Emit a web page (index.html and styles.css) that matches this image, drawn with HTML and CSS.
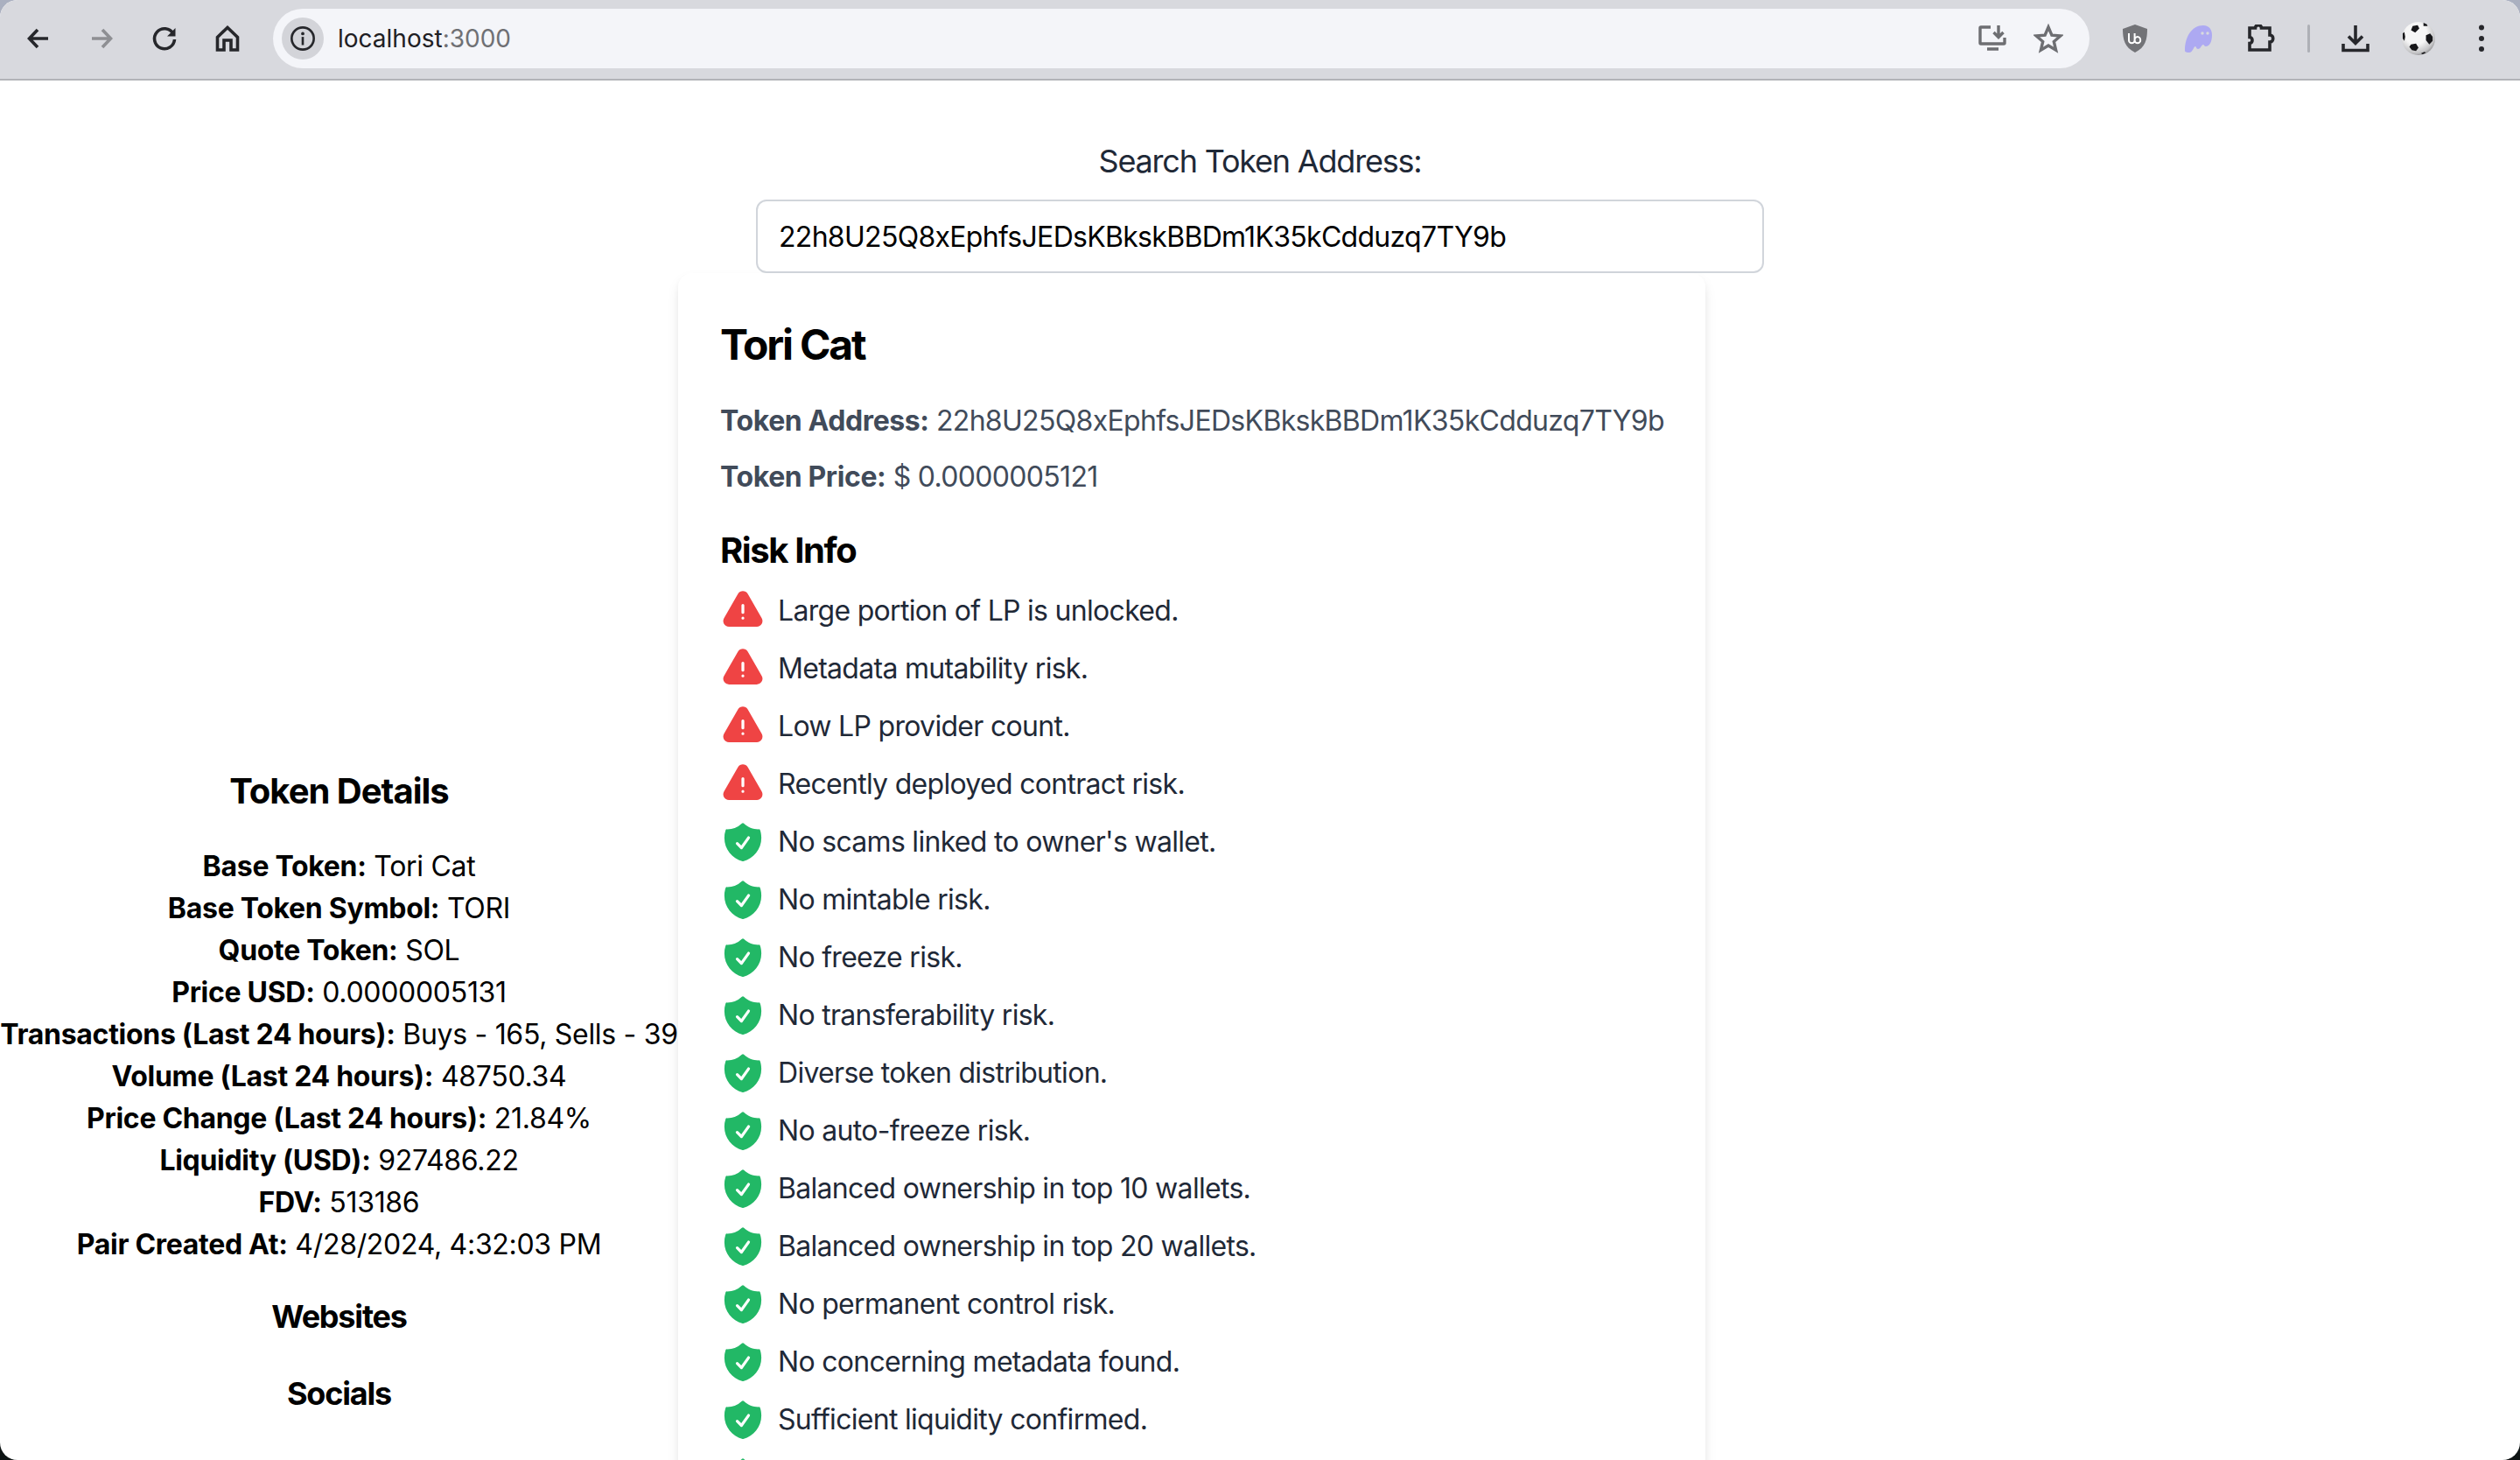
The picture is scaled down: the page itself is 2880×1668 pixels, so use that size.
FILE: index.html
```html
<!DOCTYPE html>
<html lang="en">
<head>
<meta charset="utf-8">
<title>localhost:3000</title>
<link rel="stylesheet" href="styles.css">
</head>
<body>
<svg class="defs" width="0" height="0" aria-hidden="true">
  <symbol id="warn" viewBox="0 0 24 24"><path fill-rule="evenodd" clip-rule="evenodd" d="M9.401 3.003c1.155-2 4.043-2 5.197 0l7.355 12.748c1.154 2-.29 4.5-2.599 4.5H4.645c-2.309 0-3.752-2.5-2.598-4.5L9.4 3.003zM12 8.25a.75.75 0 01.75.75v3.75a.75.75 0 01-1.5 0V9A.75.75 0 0112 8.25zm0 8.25a.75.75 0 100-1.5.75.75 0 000 1.5z"/></symbol>
  <symbol id="ok" viewBox="0 0 24 24"><path fill-rule="evenodd" clip-rule="evenodd" d="M12.516 2.17a.75.75 0 00-1.032 0 11.209 11.209 0 01-7.877 3.08.75.75 0 00-.722.515A12.74 12.74 0 002.25 9.75c0 5.942 4.064 10.933 9.563 12.348a.749.749 0 00.374 0c5.499-1.415 9.563-6.406 9.563-12.348 0-1.39-.223-2.73-.635-3.985a.75.75 0 00-.722-.516l-.143.001c-2.996 0-5.717-1.17-7.734-3.08zm3.094 8.016a.75.75 0 10-1.22-.872l-3.236 4.53L9.53 12.22a.75.75 0 00-1.06 1.06l2.25 2.25a.75.75 0 001.14-.094l3.75-5.25z"/></symbol>
</svg>
<div class="window">
  <header class="toolbar">
    <div class="tool"><svg class="ic" viewBox="0 0 32 32"><path class="st dark" d="M27 16H6M15 6 5.500 16 15 26"/></svg></div>
    <div class="tool"><svg class="ic" viewBox="0 0 32 32"><path class="st faint" d="M5 16h21M17 6l9.500 10L17 26"/></svg></div>
    <div class="tool"><svg class="ic" viewBox="0 0 32 32"><path class="st dark" d="M26 10.500A11.500 11.500 0 1 0 27.500 17"/><path class="fl-dark" d="M19 13.500h9.500V4z"/></svg></div>
    <div class="tool"><svg class="ic" viewBox="0 0 32 32"><path class="st dark" d="M4.500 14.500 16 3.500l11.500 11V29H20V18h-8v11H4.500z"/></svg></div>
    <div class="omnibox">
      <div class="site-info"><svg class="info" viewBox="0 0 32 32"><circle class="st-thin" cx="16" cy="16" r="13.500"/><circle class="fl-dark" cx="16" cy="10" r="2"/><path class="st-thin" d="M16 14v10"/></svg></div>
      <div class="url">localhost<span class="port">:3000</span></div>
      <svg class="ic-omni" viewBox="0 0 34 34"><path class="st-gray" d="M15 4H4a1 1 0 0 0-1 1v17a1 1 0 0 0 1 1h26a1 1 0 0 0 1-1v-6"/><path class="st-gray" d="M24 2v13M18.500 10l5.500 5.500 5.500-5.500M11 29h13"/></svg>
      <svg class="ic-omni star" viewBox="0 0 34 34"><path class="st-gray" d="m17 4 3.900 9.200 10 .8-7.600 6.500 2.300 9.700L17 25l-8.600 5.200 2.300-9.700L3.100 14l10-.8z"/></svg>
    </div>
    <div class="tool"><svg class="ic" viewBox="0 0 32 32"><path class="fl-ub" d="M16 0 30 5c0 12-2 21-14 27C4 26 2 17 2 5z"/><path class="st-ub" d="M9 10v8a3.300 3.300 0 0 0 6.600 0v-8M15.600 10v8a3.300 3.300 0 0 0 6.600 0 3.300 4 0 0 0-6.600 0"/></svg></div>
    <div class="tool"><svg class="ic" viewBox="0 0 32 32"><path class="fl-ghost" d="M1 30C1 14 9 1 22 1c7 0 10 5 10 11 0 8-3 13-7 13-2 0-2-2-3-2-2 0-3 5-6 5-2 0-2-3-3-3-2 0-3 7-7 7-3 0-5-.500-5-2z"/><circle class="fl-white" cx="21" cy="10" r="1.700"/><circle class="fl-white" cx="27" cy="10" r="1.700"/></svg></div>
    <div class="tool"><svg class="ic" viewBox="0 0 32 32"><path class="st dark" d="M3 4h6.500c0-4.500 7-4.500 7 0H26v8c5 0 5 8 0 8v9H3v-7.500c4 0 4-7 0-7z"/></svg></div>
    <div class="sep"></div>
    <div class="tool"><svg class="ic" viewBox="0 0 32 32"><path class="st dark" d="M16 1v20M8 13.500l8 8 8-8M2 22v7.500h28V22"/></svg></div>
    <div class="tool"><svg class="ball" viewBox="0 0 40 40"><defs><radialGradient id="ballg" cx=".42" cy=".36" r=".72"><stop offset=".45" stop-color="#f6f6f6"/><stop offset=".8" stop-color="#c4c4c6"/><stop offset="1" stop-color="#77777a"/></radialGradient></defs><circle cx="20" cy="20" r="20" fill="url(#ballg)"/><path class="fl-black" d="m13 5 6-1 2 4-5 5-5-3zM29 16l5-2 3 4v5l-4 4-4-5zM11 27l6-1 3 5-3 4-5-1-3-4zM23 38l4-2 2 1-4 2zM1 14l2-2 1 6-1 5-2-3zM26 1l4 2 1 2h-5z"/></svg></div>
    <div class="tool"><svg class="ic" viewBox="0 0 32 32"><circle class="fl-dark" cx="16" cy="3.500" r="3"/><circle class="fl-dark" cx="16" cy="16" r="3"/><circle class="fl-dark" cx="16" cy="28" r="3"/></svg></div>
  </header>
  <main class="page">
    <section class="search">
      <label class="search-label" for="addr">Search Token Address:</label>
      <input class="search-input" id="addr" type="text" value="22h8U25Q8xEphfsJEDsKBkskBBDm1K35kCdduzq7TY9b">
    </section>
    <div class="content">
      <aside class="details">
        <h2 class="details-title">Token Details</h2>
        <div class="facts">
          <p><b>Base Token:</b> Tori Cat</p>
          <p><b>Base Token Symbol:</b> TORI</p>
          <p><b>Quote Token:</b> SOL</p>
          <p><b>Price USD:</b> 0.0000005131</p>
          <p><b>Transactions (Last 24 hours):</b> Buys - 165, Sells - 39</p>
          <p><b>Volume (Last 24 hours):</b> 48750.34</p>
          <p><b>Price Change (Last 24 hours):</b> 21.84%</p>
          <p><b>Liquidity (USD):</b> 927486.22</p>
          <p><b>FDV:</b> 513186</p>
          <p><b>Pair Created At:</b> 4/28/2024, 4:32:03 PM</p>
        </div>
        <h3 class="sub-title">Websites</h3>
        <h3 class="sub-title">Socials</h3>
      </aside>
      <article class="card">
        <h1 class="token-name">Tori Cat</h1>
        <p class="meta"><b>Token Address:</b> 22h8U25Q8xEphfsJEDsKBkskBBDm1K35kCdduzq7TY9b</p>
        <p class="meta"><b>Token Price:</b> $ 0.0000005121</p>
        <h2 class="risk-title">Risk Info</h2>
        <ul class="risks">
          <li><svg class="risk-icon bad"><use href="#warn"/></svg>Large portion of LP is unlocked.</li>
          <li><svg class="risk-icon bad"><use href="#warn"/></svg>Metadata mutability risk.</li>
          <li><svg class="risk-icon bad"><use href="#warn"/></svg>Low LP provider count.</li>
          <li><svg class="risk-icon bad"><use href="#warn"/></svg>Recently deployed contract risk.</li>
          <li><svg class="risk-icon good"><use href="#ok"/></svg>No scams linked to owner's wallet.</li>
          <li><svg class="risk-icon good"><use href="#ok"/></svg>No mintable risk.</li>
          <li><svg class="risk-icon good"><use href="#ok"/></svg>No freeze risk.</li>
          <li><svg class="risk-icon good"><use href="#ok"/></svg>No transferability risk.</li>
          <li><svg class="risk-icon good"><use href="#ok"/></svg>Diverse token distribution.</li>
          <li><svg class="risk-icon good"><use href="#ok"/></svg>No auto-freeze risk.</li>
          <li><svg class="risk-icon good"><use href="#ok"/></svg>Balanced ownership in top 10 wallets.</li>
          <li><svg class="risk-icon good"><use href="#ok"/></svg>Balanced ownership in top 20 wallets.</li>
          <li><svg class="risk-icon good"><use href="#ok"/></svg>No permanent control risk.</li>
          <li><svg class="risk-icon good"><use href="#ok"/></svg>No concerning metadata found.</li>
          <li><svg class="risk-icon good"><use href="#ok"/></svg>Sufficient liquidity confirmed.</li>
          <li><svg class="risk-icon good"><use href="#ok"/></svg></li>
        </ul>
      </article>
    </div>
  </main>
</div>
</body>
</html>
```

FILE: styles.css
```css
* { box-sizing: border-box; }
html, body { margin: 0; height: 100%; }
body {
  background: linear-gradient(#aab0c0 0 40px, #0e1414 40px);
  font-family: Inter, "Liberation Sans", sans-serif;
  font-size: 32px;
  line-height: 48px;
  color: #000;
  overflow: hidden;
}
.defs { position: absolute; }
.window {
  height: 1668px;
  background: #fff;
  border-radius: 20px;
  overflow: hidden;
  display: flex;
  flex-direction: column;
}
.toolbar {
  flex: none;
  height: 92px;
  padding: 10px 8px 12px;
  display: flex;
  background: #d8d9de;
  border-bottom: 2px solid #b2b3b8;
}
.tool {
  flex: none;
  width: 72px;
  display: flex;
  align-items: center;
  justify-content: center;
}
.ic { width: 32px; height: 32px; display: block; }
.ball { width: 38px; height: 40px; display: block; }
.st, .st-thin, .st-gray, .st-ub { fill: none; }
.st { stroke-width: 3.600; }
.dark { stroke: #26272b; }
.faint { stroke: #8e8f93; }
.fl-dark { fill: #26272b; }
.st-thin { stroke: #26272b; stroke-width: 2.800; }
.st-gray { stroke: #6d6e72; stroke-width: 3.400; }
.fl-ub { fill: #727377; }
.st-ub { stroke: #fff; stroke-width: 2; }
.fl-ghost { fill: #ada9f2; }
.fl-white { fill: #d8d9de; }
.fl-black { fill: #17171a; }
.omnibox {
  flex: 1;
  min-width: 0;
  margin: 0 16px 0 16px;
  padding-left: 10px;
  padding-right: 30px;
  background: #f4f5f9;
  border-radius: 34px;
  display: flex;
  align-items: center;
}
.site-info {
  flex: none;
  width: 48px;
  height: 48px;
  border-radius: 50%;
  background: #d3d4d9;
  display: flex;
  align-items: center;
  justify-content: center;
}
.info { width: 30px; height: 30px; display: block; }
.url {
  flex: 1;
  margin-left: 16px;
  font-size: 28px;
  line-height: 40px;
  color: #1f2024;
}
.port { color: #6f7074; }
.ic-omni { flex: none; width: 34px; height: 34px; display: block; }
.star { margin-left: 30px; }
.sep {
  flex: none;
  width: 36px;
  display: flex;
  justify-content: center;
  align-items: center;
}
.sep::before {
  content: "";
  width: 3px;
  height: 32px;
  border-radius: 2px;
  background: #aeb0b6;
}
.page { flex: 1; min-height: 0; }
.search {
  padding-top: 68px;
  display: flex;
  flex-direction: column;
  align-items: center;
}
.search-label {
  font-size: 36px;
  line-height: 48px;
  letter-spacing: -1.2px;
  color: #1f2937;
  margin-bottom: 20px;
}
.search-input {
  width: 1152px;
  height: 84px;
  padding: 0 24px;
  border: 2px solid #d1d5db;
  border-radius: 12px;
  font: inherit;
  font-size: 32px;
  letter-spacing: -.7px;
  color: #000;
  background: #fff;
  outline: none;
}
.content { display: flex; align-items: flex-start; }
.details {
  flex: none;
  width: 775px;
  padding-top: 564px;
  text-align: center;
}
.details p { margin: 0; white-space: nowrap; letter-spacing: -.3px; }
.details b { font-weight: 700; letter-spacing: -.3px; }
.meta b { font-weight: 700; letter-spacing: -.4px; }
.details-title {
  margin: 0 0 34px;
  font-size: 40px;
  line-height: 56px;
  font-weight: 700;
  letter-spacing: -1px;
}
.sub-title {
  margin: 32px 0 0;
  font-size: 36px;
  line-height: 56px;
  font-weight: 700;
  letter-spacing: -1.2px;
}
.facts + .sub-title { margin-top: 30px; }
.card {
  flex: none;
  width: 1174px;
  padding: 48px;
  border-radius: 16px;
  background: #fff;
  box-shadow: 0 8px 16px -2px rgba(0,0,0,.1), 0 4px 8px -2px rgba(0,0,0,.06);
}
.token-name {
  margin: 2px 0 31px;
  font-size: 48px;
  line-height: 64px;
  font-weight: 700;
  letter-spacing: -2.2px;
}
.meta { margin: 0 0 16px; color: #414b5a; white-space: nowrap; letter-spacing: -.68px; }
.risk-title {
  margin: 32px 0 8px;
  font-size: 40px;
  line-height: 56px;
  font-weight: 700;
  letter-spacing: -1.4px;
}
.risks { list-style: none; margin: 0; padding: 0; }
.risks li {
  height: 66px;
  display: flex;
  align-items: center;
  color: #1f2937;
  letter-spacing: -.7px;
}
.risk-icon { flex: none; width: 52px; height: 52px; margin-right: 14px; }
.bad { fill: #ef4444; }
.good { fill: #22b866; }
```
